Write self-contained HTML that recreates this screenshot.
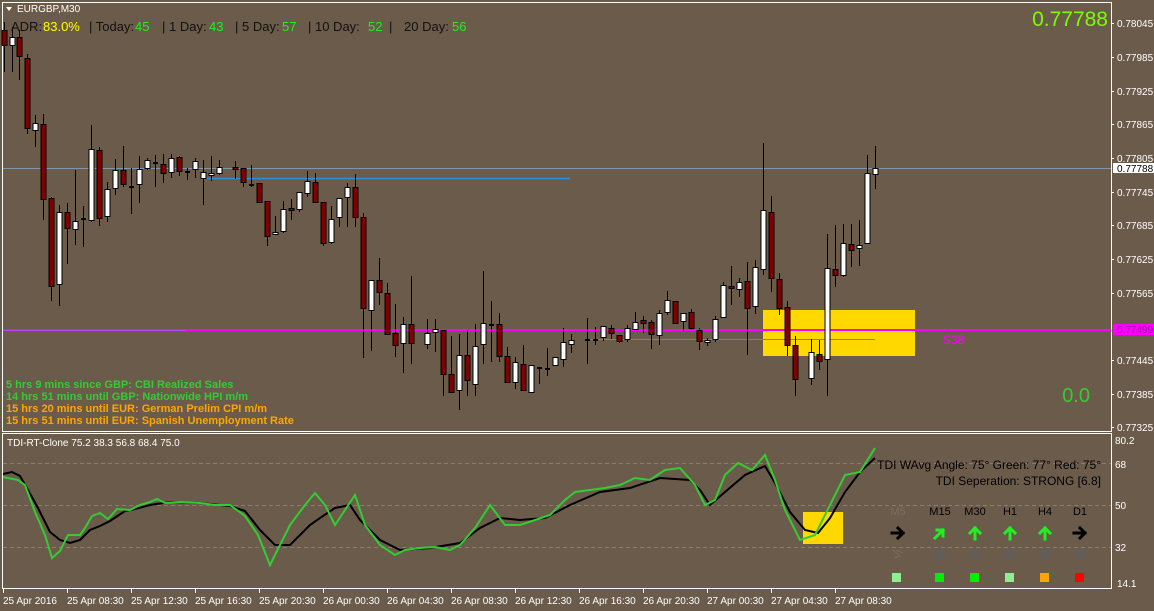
<!DOCTYPE html>
<html><head><meta charset="utf-8"><style>
html,body{margin:0;padding:0;background:#6b5b4b;width:1154px;height:611px;overflow:hidden}
svg{display:block}
text{font-family:"Liberation Sans",sans-serif}
</style></head><body>
<svg id="s" width="1154" height="611" xmlns="http://www.w3.org/2000/svg">
<rect width="1154" height="611" fill="#6b5b4b"/>
<rect x="2.5" y="2.5" width="1109" height="429" fill="none" stroke="#fff" stroke-width="1"/>
<rect x="2.5" y="433.5" width="1109" height="155" fill="none" stroke="#fff" stroke-width="1"/>
<g stroke="#8a7b6c" stroke-dasharray="4,3" stroke-width="1">
<line x1="3" y1="463.5" x2="1111" y2="463.5"/>
<line x1="3" y1="505.5" x2="1111" y2="505.5"/>
<line x1="3" y1="547.5" x2="1111" y2="547.5"/>
</g>
<line x1="3" y1="168.5" x2="1111" y2="168.5" stroke="#7f95a8" stroke-width="1"/>
<line x1="205" y1="178.5" x2="570" y2="178.5" stroke="#2e8fe0" stroke-width="1.5"/>
<rect x="763" y="310" width="152" height="46" fill="#ffd800"/>
<line x1="3" y1="330" x2="1111" y2="330" stroke="#ff00ff" stroke-width="2"/>
<line x1="3" y1="330.5" x2="186" y2="330.5" stroke="#c040ff" stroke-width="1"/>
<line x1="587" y1="339.5" x2="875" y2="339.5" stroke="#4a90c8" stroke-width="1"/>
<g id="candles"></g>
<polygon points="6,7 12,7 9,11" fill="#fff"/>
<text x="17" y="12" font-size="10" fill="#fff">EURGBP,M30</text>
<g font-size="13" fill="#111">
<text x="11" y="31">ADR:</text><text x="43" y="31" fill="#ffff00">83.0%</text>
<text x="89" y="31">| Today:</text><text x="135" y="31" fill="#22ee22">45</text>
<text x="162" y="31">| 1 Day:</text><text x="209" y="31" fill="#22ee22">43</text>
<text x="235" y="31">| 5 Day:</text><text x="282" y="31" fill="#22ee22">57</text>
<text x="308" y="31">| 10 Day:</text><text x="368" y="31" fill="#22ee22">52</text>
<text x="389" y="31">|</text>
<text x="404" y="31">20 Day:</text><text x="452" y="31" fill="#22ee22">56</text>
</g>
<text x="1108" y="26" font-size="21" fill="#7cfc00" text-anchor="end">0.77788</text>
<text x="1090" y="402" font-size="20" fill="#33cc33" text-anchor="end">0.0</text>
<text x="943" y="344" font-size="12" fill="#ff00ff">S38</text>
<g font-size="11" font-weight="bold">
<text x="6" y="388" fill="#33cc33">5 hrs 9 mins since GBP: CBI Realized Sales</text>
<text x="6" y="400" fill="#33cc33">14 hrs 51 mins until GBP: Nationwide HPI m/m</text>
<text x="6" y="412" fill="#ffa500">15 hrs 20 mins until EUR: German Prelim CPI m/m</text>
<text x="6" y="424" fill="#ffa500">15 hrs 51 mins until EUR: Spanish Unemployment Rate</text>
</g>
<g font-size="10" fill="#fff">
<text x="1117" y="27">0.78045</text>
<text x="1117" y="61">0.77985</text>
<text x="1117" y="95">0.77925</text>
<text x="1117" y="128">0.77865</text>
<text x="1117" y="162">0.77805</text>
<text x="1117" y="196">0.77745</text>
<text x="1117" y="229">0.77685</text>
<text x="1117" y="263">0.77625</text>
<text x="1117" y="297">0.77565</text>
<text x="1117" y="364">0.77445</text>
<text x="1117" y="398">0.77385</text>
<text x="1117" y="431">0.77325</text>
</g>
<g stroke="#fff"><line x1="1111" y1="23.5" x2="1114" y2="23.5"/><line x1="1111" y1="57.5" x2="1114" y2="57.5"/><line x1="1111" y1="91.5" x2="1114" y2="91.5"/><line x1="1111" y1="124.5" x2="1114" y2="124.5"/><line x1="1111" y1="158.5" x2="1114" y2="158.5"/><line x1="1111" y1="192.5" x2="1114" y2="192.5"/><line x1="1111" y1="225.5" x2="1114" y2="225.5"/><line x1="1111" y1="259.5" x2="1114" y2="259.5"/><line x1="1111" y1="293.5" x2="1114" y2="293.5"/><line x1="1111" y1="360.5" x2="1114" y2="360.5"/><line x1="1111" y1="394.5" x2="1114" y2="394.5"/><line x1="1111" y1="427.5" x2="1114" y2="427.5"/></g>
<rect x="1113" y="163" width="41" height="10" fill="#fff"/>
<text x="1117" y="172" font-size="10" fill="#000">0.77788</text>
<rect x="1113" y="324" width="41" height="11" fill="#ff00ff"/>
<text x="1117" y="333" font-size="10" fill="#a000a0">0.77499</text>
<g font-size="10" fill="#fff">
<text x="1115" y="444">80.2</text>
<text x="1115" y="468">68</text>
<text x="1115" y="509">50</text>
<text x="1115" y="551">32</text>
<text x="1117" y="587">14.1</text>
</g>
<text x="7" y="446" font-size="10" fill="#fff">TDI-RT-Clone 75.2 38.3 56.8 68.4 75.0</text>
<rect x="803" y="512" width="40" height="32" fill="#ffd800"/>
<polyline fill="none" stroke="#000" stroke-width="2" points="3,474 12,472 20,476 28,490 38,508 50,532 60,540 70,543 80,540 90,530 100,526 110,521 125,511 135,509 150,505 170,502 200,503 230,506 245,511 260,530 275,545 290,545 300,535 310,525 320,518 335,508 350,505 360,520 380,540 400,550 430,548 460,543 480,528 500,518 520,520 545,518 570,505 600,492 630,488 660,478 690,480 700,490 710,505 725,492 745,475 765,466 775,483 790,512 805,530 818,533 830,518 845,492 860,472 875,458"/>
<polyline fill="none" stroke="#33cc33" stroke-width="2" points="3,477 18,480 25,485 35,512 45,535 52,558 60,551 68,535 80,535 85,528 92,516 100,513 108,519 117,509 130,510 140,505 150,502 157,499 165,503 180,502 200,503 215,505 230,505 245,516 258,535 270,565 280,545 290,525 305,505 315,493 325,505 335,525 345,510 355,495 365,525 380,545 395,555 405,550 420,548 435,547 450,550 460,545 475,528 490,505 505,525 520,525 535,520 550,515 565,500 575,492 590,490 605,488 620,485 635,478 650,480 665,470 680,468 695,485 705,505 715,500 725,475 738,463 752,470 765,455 775,480 785,510 800,540 815,535 830,505 845,475 860,472 875,448"/>
<g font-size="12" fill="#000" text-anchor="end">
<text x="1101" y="469">TDI WAvg Angle: 75°  Green: 77°  Red: 75°</text>
<text x="1101" y="485">TDI Seperation: STRONG [6.8]</text>
</g>
<g font-size="11" text-anchor="middle" fill="#000">
<text x="898" y="515" fill="#7d6d5e">M5</text>
<text x="940" y="515">M15</text>
<text x="975" y="515">M30</text>
<text x="1010" y="515">H1</text>
<text x="1045" y="515">H4</text>
<text x="1080" y="515">D1</text>
</g>
<g stroke-width="3" fill="none" stroke-linecap="square">
<path d="M892,533 H903 M898,528 L903,533 L898,538" stroke="#000"/>
<path d="M935,538 L943,530 M937,530 H943 V536" stroke="#22ee22"/>
<path d="M975,539 V528 M970,533 L975,528 L980,533" stroke="#22ee22"/>
<path d="M1010,539 V528 M1005,533 L1010,528 L1015,533" stroke="#22ee22"/>
<path d="M1045,539 V528 M1040,533 L1045,528 L1050,533" stroke="#22ee22"/>
<path d="M1074,533 H1085 M1080,528 L1085,533 L1080,538" stroke="#000"/>
</g>
<g fill="none" stroke="#5e5e5e" stroke-width="3">
<circle cx="940" cy="554" r="4"/><circle cx="975" cy="554" r="4"/><circle cx="1010" cy="554" r="4"/><circle cx="1045" cy="554" r="4"/>
</g>
<circle cx="1080" cy="554" r="4.5" fill="#5e5e5e"/>
<path d="M893,550 L900,556 L894,558 M896,550 L903,553" stroke="#7d6d5e" fill="none"/>
<rect x="892" y="573" width="9" height="9" fill="#90ee90"/>
<rect x="935" y="573" width="9" height="9" fill="#00ee00"/>
<rect x="970" y="573" width="9" height="9" fill="#00ee00"/>
<rect x="1005" y="573" width="9" height="9" fill="#90ee90"/>
<rect x="1040" y="573" width="9" height="9" fill="#ffa500"/>
<rect x="1075" y="573" width="9" height="9" fill="#ff0000"/>
<g stroke="#fff"><line x1="3.5" y1="589" x2="3.5" y2="593"/><line x1="67.5" y1="589" x2="67.5" y2="593"/><line x1="131.5" y1="589" x2="131.5" y2="593"/><line x1="195.5" y1="589" x2="195.5" y2="593"/><line x1="259.5" y1="589" x2="259.5" y2="593"/><line x1="323.5" y1="589" x2="323.5" y2="593"/><line x1="387.5" y1="589" x2="387.5" y2="593"/><line x1="451.5" y1="589" x2="451.5" y2="593"/><line x1="515.5" y1="589" x2="515.5" y2="593"/><line x1="579.5" y1="589" x2="579.5" y2="593"/><line x1="643.5" y1="589" x2="643.5" y2="593"/><line x1="707.5" y1="589" x2="707.5" y2="593"/><line x1="771.5" y1="589" x2="771.5" y2="593"/><line x1="835.5" y1="589" x2="835.5" y2="593"/></g>
<g font-size="10" fill="#fff">
<text x="3" y="604">25 Apr 2016</text>
<text x="67" y="604">25 Apr 08:30</text>
<text x="131" y="604">25 Apr 12:30</text>
<text x="195" y="604">25 Apr 16:30</text>
<text x="259" y="604">25 Apr 20:30</text>
<text x="323" y="604">26 Apr 00:30</text>
<text x="387" y="604">26 Apr 04:30</text>
<text x="451" y="604">26 Apr 08:30</text>
<text x="515" y="604">26 Apr 12:30</text>
<text x="579" y="604">26 Apr 16:30</text>
<text x="643" y="604">26 Apr 20:30</text>
<text x="707" y="604">27 Apr 00:30</text>
<text x="771" y="604">27 Apr 04:30</text>
<text x="835" y="604">27 Apr 08:30</text>
</g>
</svg>
<script>
var C=[[4,30,45,22,72,'r'],[12,37,45,27,72,'w'],[19,37,56,30,80,'r'],[27,58,128,54,134,'r'],[35,123,130,115,147,'w'],[43,124,199,114,220,'r'],[51,198,286,197,301,'r'],[59,212,284,205,306,'w'],[67,212,228,203,264,'r'],[75,221,229,170,245,'w'],[83,218,220,206,247,'k'],[91,149,220,125,222,'w'],[99,150,218,147,226,'r'],[107,189,216,182,222,'w'],[115,170,188,159,195,'w'],[123,170,184,146,187,'r'],[131,186,187,168,214,'k'],[139,169,184,156,203,'w'],[147,160,168,158,170,'w'],[155,162,163,155,187,'k'],[163,164,173,154,183,'r'],[171,158,172,154,178,'w'],[179,157,171,156,176,'r'],[187,171,172,168,180,'k'],[195,161,169,158,178,'w'],[203,172,178,160,205,'w'],[211,173,175,156,181,'w'],[219,167,173,160,175,'w'],[235,167,169,161,179,'r'],[243,168,182,168,187,'r'],[251,184,185,165,187,'k'],[259,183,202,183,203,'r'],[267,201,236,201,246,'r'],[275,232,234,216,234,'w'],[283,209,231,201,233,'w'],[291,208,210,199,220,'r'],[299,192,209,192,212,'w'],[307,181,193,171,197,'w'],[315,182,202,173,202,'r'],[323,202,243,202,246,'r'],[331,219,242,206,244,'w'],[339,198,217,198,227,'w'],[347,187,197,183,227,'w'],[355,187,217,174,227,'r'],[363,217,308,213,358,'r'],[371,280,310,280,351,'w'],[379,280,292,258,305,'r'],[387,293,334,283,334,'r'],[395,333,345,304,357,'r'],[403,324,343,317,373,'w'],[411,324,343,276,364,'r'],[427,333,344,319,349,'w'],[435,329,332,319,352,'w'],[443,330,374,330,396,'r'],[451,374,392,336,392,'r'],[459,355,390,334,410,'w'],[467,355,380,330,396,'r'],[475,346,384,324,396,'w'],[483,323,344,271,364,'w'],[491,324,325,301,362,'k'],[499,324,356,313,362,'r'],[507,356,382,347,382,'r'],[515,362,382,357,389,'w'],[523,364,390,345,390,'r'],[531,365,392,365,392,'w'],[539,367,368,367,384,'k'],[547,368,369,348,376,'k'],[555,357,365,357,366,'w'],[563,342,359,328,367,'w'],[571,340,344,334,353,'w'],[587,339,340,318,364,'k'],[595,339,340,327,345,'k'],[603,326,337,326,341,'w'],[611,328,333,325,339,'r'],[619,335,341,335,343,'r'],[627,328,339,325,342,'w'],[635,322,329,312,329,'w'],[643,320,323,316,333,'r'],[651,322,334,320,349,'r'],[659,313,335,310,345,'w'],[667,300,312,291,315,'w'],[675,301,323,301,323,'r'],[683,313,321,313,331,'w'],[691,312,328,309,330,'r'],[699,330,341,328,350,'r'],[707,340,342,338,346,'w'],[715,319,339,316,342,'w'],[723,285,317,282,317,'w'],[731,286,288,266,305,'r'],[739,282,289,278,297,'w'],[747,281,308,262,355,'r'],[755,267,306,260,314,'w'],[763,210,269,143,275,'w'],[771,212,278,196,292,'r'],[779,279,308,273,315,'r'],[787,307,345,301,356,'r'],[795,345,379,336,396,'r'],[811,352,378,339,385,'w'],[819,354,361,340,370,'r'],[827,268,359,234,396,'w'],[835,269,275,225,287,'r'],[843,243,275,224,277,'w'],[851,244,250,224,267,'r'],[859,245,248,220,266,'w'],[867,173,243,155,243,'w'],[875,168,174,146,189,'w']];
var g=document.getElementById('candles'),h='';
C.forEach(function(c){var x=c[0];h+='<line x1="'+(x+0.5)+'" y1="'+c[3]+'" x2="'+(x+0.5)+'" y2="'+c[4]+'" stroke="#000" stroke-width="1"/>';
if(c[5]=='k'){h+='<rect x="'+(x-2)+'" y="'+c[1]+'" width="5" height="2" fill="#000"/>';}
else{h+='<rect x="'+(x-2)+'" y="'+(c[1]+0.5)+'" width="5" height="'+Math.max(2,c[2]-c[1])+'" fill="'+(c[5]=='r'?'#800000':'#fff')+'" stroke="#000" stroke-width="1"/>';}});
g.innerHTML=h;
</script>
</body></html>
